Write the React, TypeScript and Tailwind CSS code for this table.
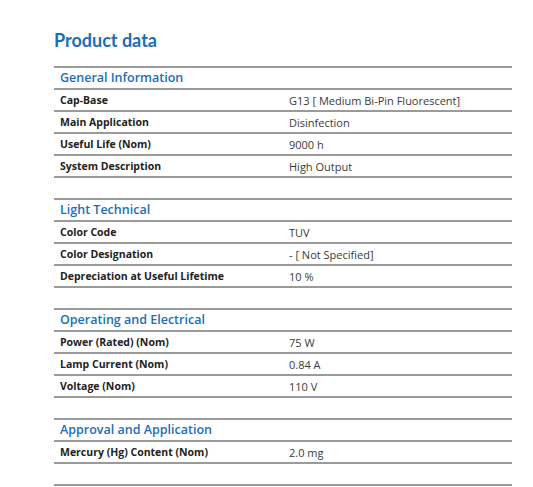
import React from "react";

type Row = [string, string];

interface Section {
    title: string;
    rows: Row[];
}

const sections: Section[] = [
    {
        title: "General Information",
        rows: [
            ["Cap-Base", "G13 [ Medium Bi-Pin Fluorescent]"],
            ["Main Application", "Disinfection"],
            ["Useful Life (Nom)", "9000 h"],
            ["System Description", "High Output"],
        ],
    },
    {
        title: "Light Technical",
        rows: [
            ["Color Code", "TUV"],
            ["Color Designation", "- [ Not Specified]"],
            ["Depreciation at Useful Lifetime", "10 %"],
        ],
    },
    {
        title: "Operating and Electrical",
        rows: [
            ["Power (Rated) (Nom)", "75 W"],
            ["Lamp Current (Nom)", "0.84 A"],
            ["Voltage (Nom)", "110 V"],
        ],
    },
    {
        title: "Approval and Application",
        rows: [["Mercury (Hg) Content (Nom)", "2.0 mg"]],
    },
];

function DataSection({title, rows}: Section) {
    return (
        <div className="border-t-2 border-[#9a9a9a] mb-[20px]">
            <div className="h-[22px] flex items-center px-[6px] border-b-2 border-[#9a9a9a]">
                <h3 className="text-[12.5px] font-semibold text-[#1a6fb6] leading-none">{title}</h3>
            </div>
            {rows.map(([label, value]) => (
                <div key={label} className="h-[22px] flex items-center border-b-2 border-[#9a9a9a] leading-none">
                    <div className="w-[235px] pl-[6px] text-[10.5px] font-bold text-[#222]">{label}</div>
                    <div className="text-[11px] text-[#3a3a3a]">{value}</div>
                </div>
            ))}
        </div>
    );
}

export default function App() {
    return (
        <div className="w-[533px] h-[487px] overflow-hidden bg-white pl-[54px] pt-[28px]" style={{fontFamily: "'Open Sans', 'Noto Sans', sans-serif"}}>
            <div className="w-[458px]">
                <h2 className="text-[18px] leading-[24px] font-bold text-[#1a6fb6] mb-[14px] font-['Lato',sans-serif]">Product data</h2>
                {sections.map((s) => (
                    <DataSection key={s.title} {...s}/>
                ))}
                <div className="border-t-2 border-[#9a9a9a]"></div>
            </div>
        </div>
    );
}
